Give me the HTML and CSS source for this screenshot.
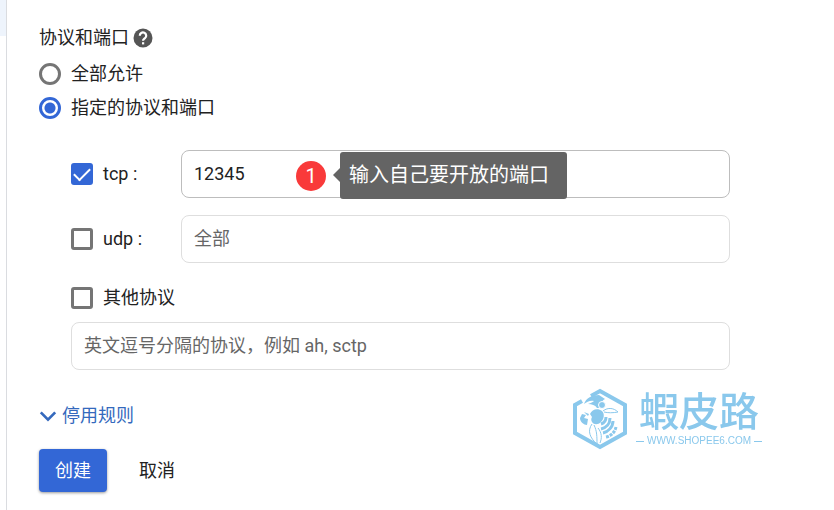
FILE: index.html
```html
<!DOCTYPE html>
<html lang="zh-CN">
<head>
    <meta charset="UTF-8">
    <meta name="viewport" content="width=device-width, initial-scale=1.0">
    <title>协议和端口</title>
    <link rel="stylesheet" href="styles.css">
</head>
<body>
    <aside class="side-rail">
        <div class="side-rail-active"></div>
    </aside>

    <form class="rule-form">
        <fieldset class="protocols">
            <legend class="section-title">
                协议和端口
                <svg class="help-icon" viewBox="0 0 20 20" aria-hidden="true">
                    <circle cx="10" cy="10" r="9.5" fill="#555" />
                    <path d="M6.800 7.800a3.200 3.200 0 1 1 5.200 2.400c-1.200 1-2 1.300-2 2.600" fill="none" stroke="#fff" stroke-width="2.200" />
                    <rect x="9" y="14.200" width="2.200" height="2.200" fill="#fff" />
                </svg>
            </legend>

            <label class="radio-row"><input type="radio" name="mode"> 全部允许</label>
            <label class="radio-row"><input type="radio" name="mode" checked> 指定的协议和端口</label>

            <div class="ports">
                <div class="port-row">
                    <label class="check-row"><input type="checkbox" checked> tcp :</label>
                    <div class="field">
                        <input class="text-input active" type="text" value="12345" aria-label="tcp">
                        <div class="hint">
                            <span class="hint-number">1</span>
                            <span class="hint-text">输入自己要开放的端口</span>
                        </div>
                    </div>
                </div>
                <div class="port-row">
                    <label class="check-row"><input type="checkbox"> udp :</label>
                    <div class="field">
                        <input class="text-input" type="text" placeholder="全部" aria-label="udp">
                    </div>
                </div>
                <div class="other">
                    <label class="check-row"><input type="checkbox"> 其他协议</label>
                    <input class="text-input" type="text" placeholder="英文逗号分隔的协议，例如 ah, sctp" aria-label="其他协议">
                </div>
            </div>
        </fieldset>

        <button class="expand" type="button">
            <svg class="chevron" viewBox="0 0 20 12" aria-hidden="true">
                <path d="M2 2l8 8 8-8" fill="none" stroke="currentColor" stroke-width="3" />
            </svg>
            停用规则
        </button>

        <div class="actions">
            <button class="btn btn-primary" type="button">创建</button>
            <button class="btn" type="button">取消</button>
        </div>
    </form>

    <div class="watermark">
        <svg class="watermark-logo" viewBox="0 0 56 64" aria-hidden="true">
            <path d="M10 14L3 18V46L28 60L53 46V18L28 4L19 9" fill="none" stroke="currentColor" stroke-width="4" />
            <!-- head and eye -->
            <path d="M12 17c2-6 8-9 15-9l6 4c-2 1-3 2-3 5 0 3-2 4-5 4-2-3-5-4-9-4 3-1 5-2 6-3-4-1-7 1-10 3z" fill="currentColor" />
            <circle cx="30" cy="18" r="3.500" fill="currentColor" stroke="#fff" stroke-width="1" />
            <!-- body -->
            <path d="M18 27c2-5 8-6 12-3 3 3 2 8-1 11-3 3-7 3-9 0-1-2-1-3 0-5z" fill="currentColor" />
            <path d="M29 37c3-1 5-4 5-7M29 42c5-1 9-5 9-11M31 46c5-1 10-6 10-12" fill="none" stroke="currentColor" stroke-width="3" />
            <path d="M34 50c5-1 9-5 10-10" fill="none" stroke="currentColor" stroke-width="3" stroke-dasharray="3 1" />
            <!-- wings -->
            <path d="M31 24c5-4 11-3 15 1-5 1-10 1-14 0M20 37c-5 7-2 14 5 20 0-7 0-13-3-19M26 41c4 5 4 10 2 15" fill="none" stroke="currentColor" stroke-width="1" />
            <!-- claw -->
            <path d="M10 27l4 1-2 3 4 1-1 6c-3 0-7-3-7-7zM12 25l5 2-1 2z" fill="currentColor" />
        </svg>
        <div class="watermark-text">
            <span class="watermark-name">蝦皮路</span>
            <span class="watermark-url">WWW.SHOPEE6.COM</span>
        </div>
    </div>
</body>
</html>
```

FILE: styles.css
```css
:root {
    --text-color: #222;
    --muted-color: #666;
    --accent-color: #3367d6;
    --link-color: #3469bd;
    --control-color: #757575;
    --watermark-color: #8ac8ec;
}

* {
    box-sizing: border-box;
    margin: 0;
    padding: 0;
}

body {
    display: flex;
    min-height: 100vh;
    font-family: Roboto, 'Noto Sans CJK SC', sans-serif;
    font-size: 18px;
    font-weight: 400;
    line-height: 24px;
    color: var(--text-color);
    background: #fff;
}

input,
button {
    font: inherit;
    color: inherit;
}

.side-rail {
    width: 7px;
    border-right: 1px solid #dadce0;
}

.side-rail-active {
    height: 36px;
    background: #eef4fc;
}

.rule-form {
    flex: 1;
    padding: 26px 104px 18px 32px;
}

.protocols {
    border: none;
}

.section-title {
    display: flex;
    align-items: center;
    gap: 4px;
    margin-bottom: 7px;
}

.help-icon {
    width: 20px;
    height: 20px;
}

.radio-row,
.check-row {
    display: flex;
    align-items: center;
    gap: 10px;
}

.radio-row {
    height: 34px;
}

input[type="radio"],
input[type="checkbox"] {
    appearance: none;
    flex: none;
    width: 22px;
    height: 22px;
    border: 3px solid var(--control-color);
}

input[type="radio"] {
    border-radius: 50%;
}

input[type="radio"]:checked {
    border-color: var(--accent-color);
    background: radial-gradient(circle, var(--accent-color) 5px, #fff 6px);
}

input[type="checkbox"] {
    border-radius: 3px;
}

input[type="checkbox"]:checked {
    display: grid;
    place-items: center;
    border-color: var(--accent-color);
    background: var(--accent-color);
}

input[type="checkbox"]:checked::before {
    content: '';
    width: 14px;
    height: 7px;
    border-left: 2px solid #fff;
    border-bottom: 2px solid #fff;
    transform: translateY(-2px) rotate(-45deg);
}

.ports {
    display: flex;
    flex-direction: column;
    gap: 17px;
    margin: 25px 0 0 32px;
}

.port-row {
    display: grid;
    grid-template-columns: 110px 1fr;
    align-items: center;
}

.field {
    position: relative;
}

.text-input {
    display: block;
    width: 100%;
    height: 48px;
    padding: 0 12px 2px;
    border: 1px solid #dedede;
    border-radius: 8px;
    background: #fff;
    outline: none;
}

.text-input.active {
    border-color: #bdbdbd;
}

.text-input::placeholder {
    color: var(--muted-color);
    opacity: 1;
}

.other {
    display: flex;
    flex-direction: column;
    gap: 12px;
    padding-top: 6px;
}

/* numbered callout over the tcp field */
.hint {
    position: absolute;
    top: 2px;
    left: 115px;
    display: flex;
    align-items: center;
    gap: 14px;
    color: #fff;
    font-size: 20px;
    white-space: nowrap;
}

.hint-number {
    width: 30px;
    height: 30px;
    border-radius: 50%;
    background: #f93a3a;
    line-height: 30px;
    text-align: center;
}

.hint-text {
    position: relative;
    padding: 0 18px 0 9px;
    border-radius: 3px;
    background: #646464;
    line-height: 47px;
}

.hint-text::before {
    content: '';
    position: absolute;
    top: 16px;
    left: -7px;
    border: 7px solid transparent;
    border-left: none;
    border-right-color: #646464;
}

.expand {
    display: flex;
    align-items: center;
    gap: 5px;
    margin-top: 34px;
    border: none;
    background: none;
    color: var(--link-color);
}

.chevron {
    width: 18px;
    height: 12px;
}

.actions {
    display: flex;
    gap: 16px;
    margin-top: 21px;
}

.btn {
    height: 43px;
    padding: 0 16px;
    border: none;
    border-radius: 4px;
    background: none;
}

.btn-primary {
    background: var(--accent-color);
    box-shadow: 0 1px 3px rgba(0, 0, 0, 0.4);
    color: #fff;
}

.watermark {
    position: fixed;
    right: 72px;
    bottom: 59px;
    display: flex;
    align-items: center;
    gap: 8px;
    color: var(--watermark-color);
    pointer-events: none;
}

.watermark-logo {
    width: 56px;
    height: 64px;
}

.watermark-text {
    display: flex;
    flex-direction: column;
    align-items: center;
}

.watermark-name {
    font-size: 40px;
    font-weight: 500;
    line-height: 44px;
}

.watermark-url {
    display: flex;
    align-items: center;
    gap: 3px;
    font-family: 'Liberation Sans', sans-serif;
    font-size: 10px;
    line-height: 12px;
}

.watermark-url::before,
.watermark-url::after {
    content: '';
    width: 8px;
    height: 1px;
    background: currentColor;
}
```
